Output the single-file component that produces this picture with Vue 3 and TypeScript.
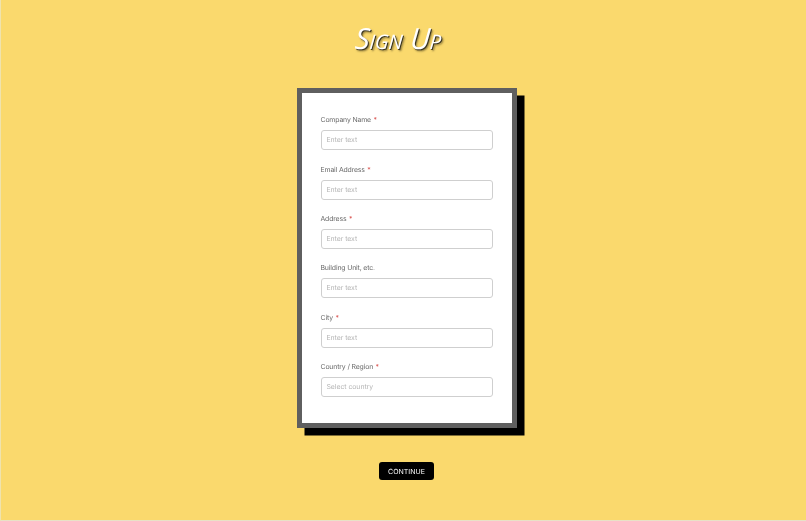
<script setup lang="ts">
interface Field { label: string; placeholder: string; required: boolean }
const fields: Field[] = [
  { label: 'Company Name', placeholder: 'Enter text', required: true },
  { label: 'Email Address', placeholder: 'Enter text', required: true },
  { label: 'Address', placeholder: 'Enter text', required: true },
  { label: 'Building Unit, etc.', placeholder: 'Enter text', required: false },
  { label: 'City', placeholder: 'Enter text', required: true },
  { label: 'Country / Region', placeholder: 'Select country', required: true },
]
</script>

<template>
  <main class="page">
    <h1 class="title">Sign Up</h1>
    <form class="card" @submit.prevent>
      <div v-for="f in fields" :key="f.label" class="field">
        <label class="label">{{ f.label }}<span v-if="f.required" class="req">*</span></label>
        <div class="input">{{ f.placeholder }}</div>
      </div>
    </form>
    <button class="continue" type="button">CONTINUE</button>
  </main>
</template>

<style>
html, body { margin: 0; background: #fad96d; }
</style>

<style scoped>
.page {
  box-sizing: border-box;
  width: 806px;
  height: 521px;
  padding-left: 6px;
  background: #fad96d;
  border-left: 1px solid #efe3ae;
  border-bottom: 1px solid #e9e2c6;
  display: flex;
  flex-direction: column;
  align-items: center;
  font-family: Inter, "Liberation Sans", sans-serif;
  text-rendering: geometricPrecision;
  overflow: hidden;
  filter: blur(0.35px);
}
.title {
  margin: 24px 18px 0 0;
  height: 63.5px;
  font-family: "Open Sans", sans-serif;
  font-style: italic;
  font-variant: small-caps;
  font-weight: 400;
  font-size: 29px;
  line-height: 30px;
  color: #fff;
  text-shadow: 1px 1px 0 #3a3520, 2px 2px 2px rgba(60, 50, 20, .6);
  transform: skewX(-4deg);
}
.card {
  box-sizing: border-box;
  width: 220px;
  height: 340.5px;
  background: #fff;
  border: 5px solid #5f5f5f;
  box-shadow: 7.5px 7.5px 0 #000;
  padding: 21.8px 19px 0 19px;
  display: flex;
  flex-direction: column;
  gap: 13.4px;
}
.field { display: flex; flex-direction: column; gap: 5px; }
.label {
  font-size: 6.9px;
  letter-spacing: -0.15px;
  line-height: 11px;
  color: #6a6a6a;
}
.req { color: #d9534f; margin-left: 2.5px; }
.input {
  box-sizing: border-box;
  width: 172px;
  height: 20px;
  border: 1px solid #cfcfcf;
  border-radius: 3px;
  padding: 0 5px;
  font-size: 6.9px;
  letter-spacing: -0.05px;
  line-height: 18px;
  color: #b5b5b5;
}
.continue {
  margin-top: 34px;
  width: 55.5px;
  height: 18px;
  padding: 0;
  border: 0;
  border-radius: 3px;
  background: #000;
  color: #fff;
  font-family: Inter, "Liberation Sans", sans-serif;
  font-size: 7px;
  text-rendering: geometricPrecision;
}
</style>
